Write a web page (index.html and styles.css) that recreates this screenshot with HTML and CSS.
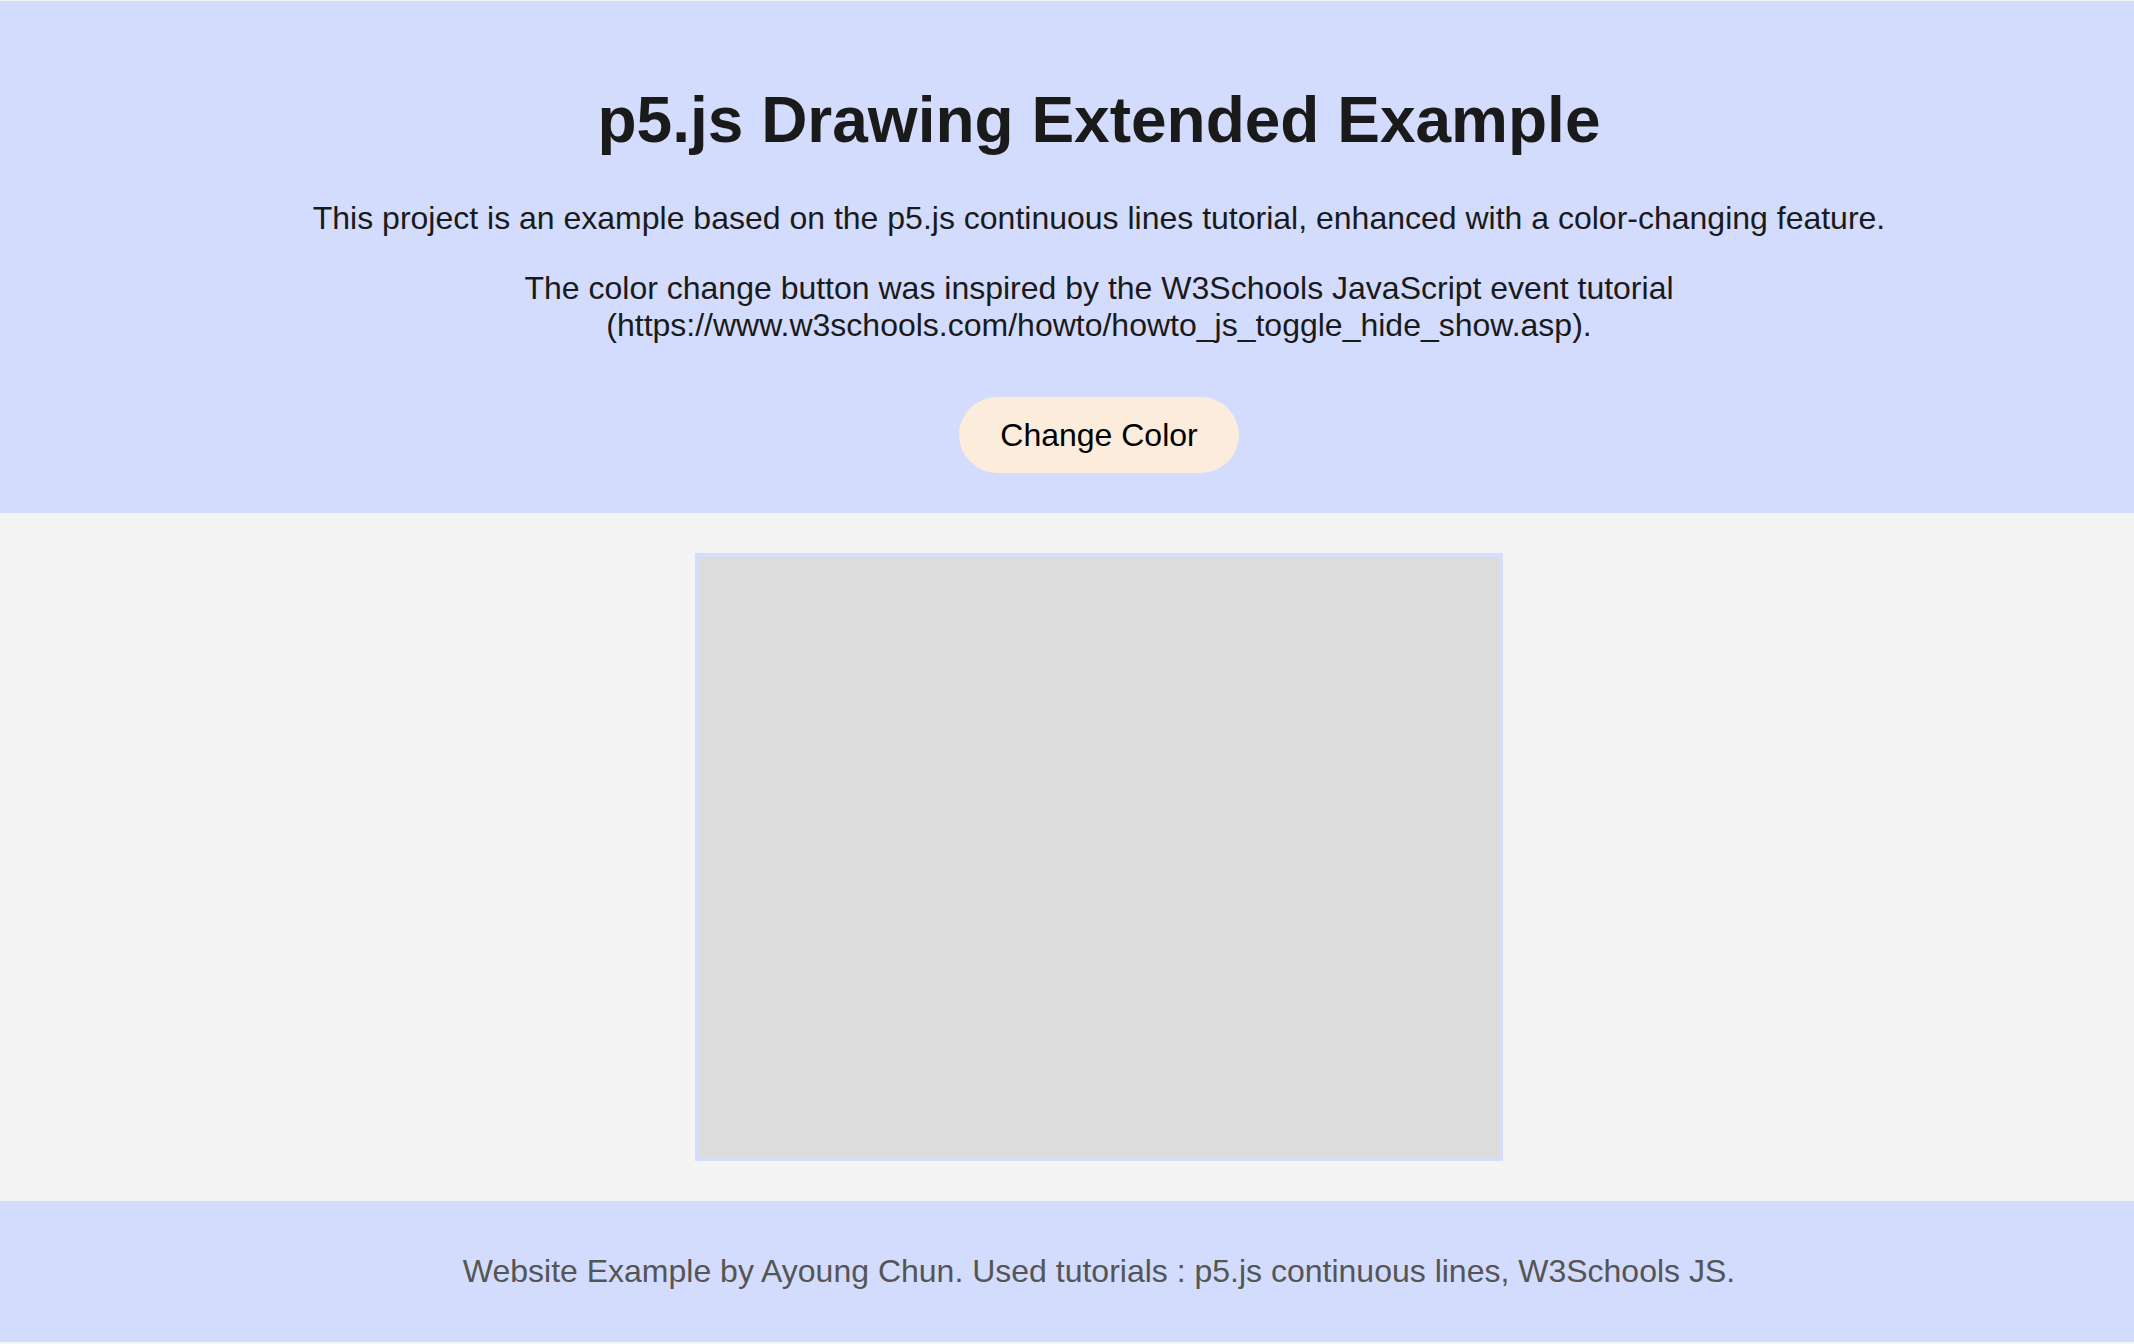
FILE: index.html
```html
<!DOCTYPE html>
<html lang="en">
<head>
<meta charset="utf-8">
<title>p5.js Drawing Extended Example</title>
<link rel="stylesheet" href="styles.css">
</head>
<body>
  <header class="site-header">
    <h1 class="title">p5.js Drawing Extended Example</h1>
    <p class="intro">This project is an example based on the p5.js continuous lines tutorial, enhanced with a color-changing feature.</p>
    <p class="intro">The color change button was inspired by the W3Schools JavaScript event tutorial (https://www.w3schools.com/howto/howto_js_toggle_hide_show.asp).</p>
    <div class="actions">
      <button class="color-btn" type="button">Change Color</button>
    </div>
  </header>
  <main class="stage">
    <div class="canvas"></div>
  </main>
  <footer class="site-footer">
    <p class="credits">Website Example by Ayoung Chun. Used tutorials : p5.js continuous lines, W3Schools JS.</p>
  </footer>
</body>
</html>
```
FILE: styles.css
```css
html, body {
  margin: 0;
  padding: 0;
}
body {
  padding-top: 1px;
  background: #f4f4f4;
  font-family: "Liberation Sans", Arial, Helvetica, sans-serif;
  font-size: 32px;
  color: #1a1a1a;
}
.site-header,
.stage,
.site-footer {
  box-sizing: border-box;
  width: 100%;
  text-align: center;
}
.site-header {
  background: #d3dcfc;
  padding: 40px 0 40px 64px;
}
.title {
  font-size: 64px;
  font-weight: bold;
  margin: 0.67em 0;
  line-height: 1.15;
  color: #1a1a1a;
}
.intro {
  margin: 32px 0;
  line-height: 1.17;
}
.actions {
  display: flex;
  justify-content: center;
}
.color-btn {
  margin-top: 20px;
  font-family: inherit;
  font-size: 32px;
  line-height: 1.15;
  color: #000;
  background: #fbecdc;
  border: none;
  border-radius: 40px;
  padding: 20px 41px;
}
.stage {
  padding: 40px 0 40px 64px;
}
.canvas {
  width: 800px;
  height: 600px;
  margin: 0 auto;
  background: #dcdcdc;
  border: 4px solid #d5ddfc;
}
.site-footer {
  background: #d3dcfc;
  padding: 20px 0 20px 64px;
}
.credits {
  margin: 32px 0;
  line-height: 1.15;
  color: #555555;
}
```
